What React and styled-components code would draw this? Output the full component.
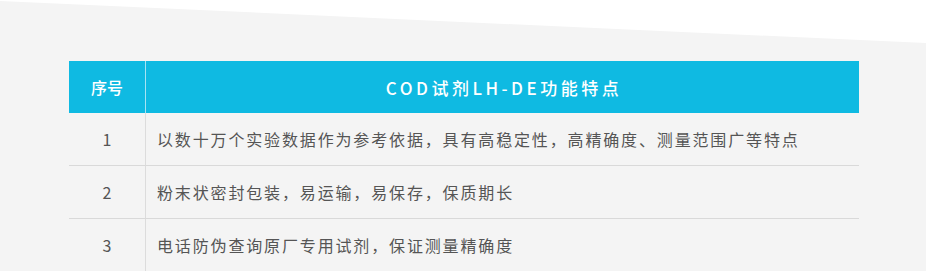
import React from "react";
import styled, { createGlobalStyle } from "styled-components";

const Global = createGlobalStyle`
  html, body { margin: 0; padding: 0; background: #ffffff; }
  body { font-family: "Noto Sans CJK SC", "Noto Sans", sans-serif; }
`;

const Section = styled.section`
  width: 926px;
  height: 271px;
  box-sizing: border-box;
  background: #f4f4f4;
  clip-path: polygon(0 1px, 100% 43px, 100% 100%, 0 100%);
  padding: 61px 0 0 69px;
`;

const Table = styled.div`
  width: 790px;
  display: grid;
  grid-template-columns: 76px 1fr;
`;

const HeadCell = styled.div`
  height: 52px;
  background: #0fbae2;
  color: #ffffff;
  display: flex;
  align-items: center;
  justify-content: center;
  font-size: ${(p) => (p.$wide ? "17px" : "16px")};
  font-weight: 500;
  letter-spacing: ${(p) => (p.$wide ? "3.5px" : "0")};
  padding-left: ${(p) => (p.$wide ? "3px" : "0")};
  border-left: ${(p) => (p.$divider ? "1px solid #a8e3f3" : "none")};
`;

const Cell = styled.div`
  height: 52px;
  border-bottom: 1px solid #d9d9d9;
  border-left: ${(p) => (p.$divider ? "1px solid #dcdcdc" : "none")};
  display: flex;
  align-items: center;
  justify-content: ${(p) => (p.$center ? "center" : "flex-start")};
  padding-left: ${(p) => (p.$center ? "0" : "11px")};
  color: #555555;
  font-size: 16px;
  letter-spacing: ${(p) => (p.$center ? "0" : "1.85px")};
  white-space: nowrap;
`;

const rows = [
  "以数十万个实验数据作为参考依据，具有高稳定性，高精确度、测量范围广等特点",
  "粉末状密封包装，易运输，易保存，保质期长",
  "电话防伪查询原厂专用试剂，保证测量精确度",
];

export default function App() {
  return (
    <>
      <Global />
      <Section>
        <Table>
          <HeadCell>序号</HeadCell>
          <HeadCell $divider $wide>COD试剂LH-DE功能特点</HeadCell>
          {rows.map((text, i) => (
            <React.Fragment key={i}>
              <Cell $center>{i + 1}</Cell>
              <Cell $divider>{text}</Cell>
            </React.Fragment>
          ))}
        </Table>
      </Section>
    </>
  );
}
